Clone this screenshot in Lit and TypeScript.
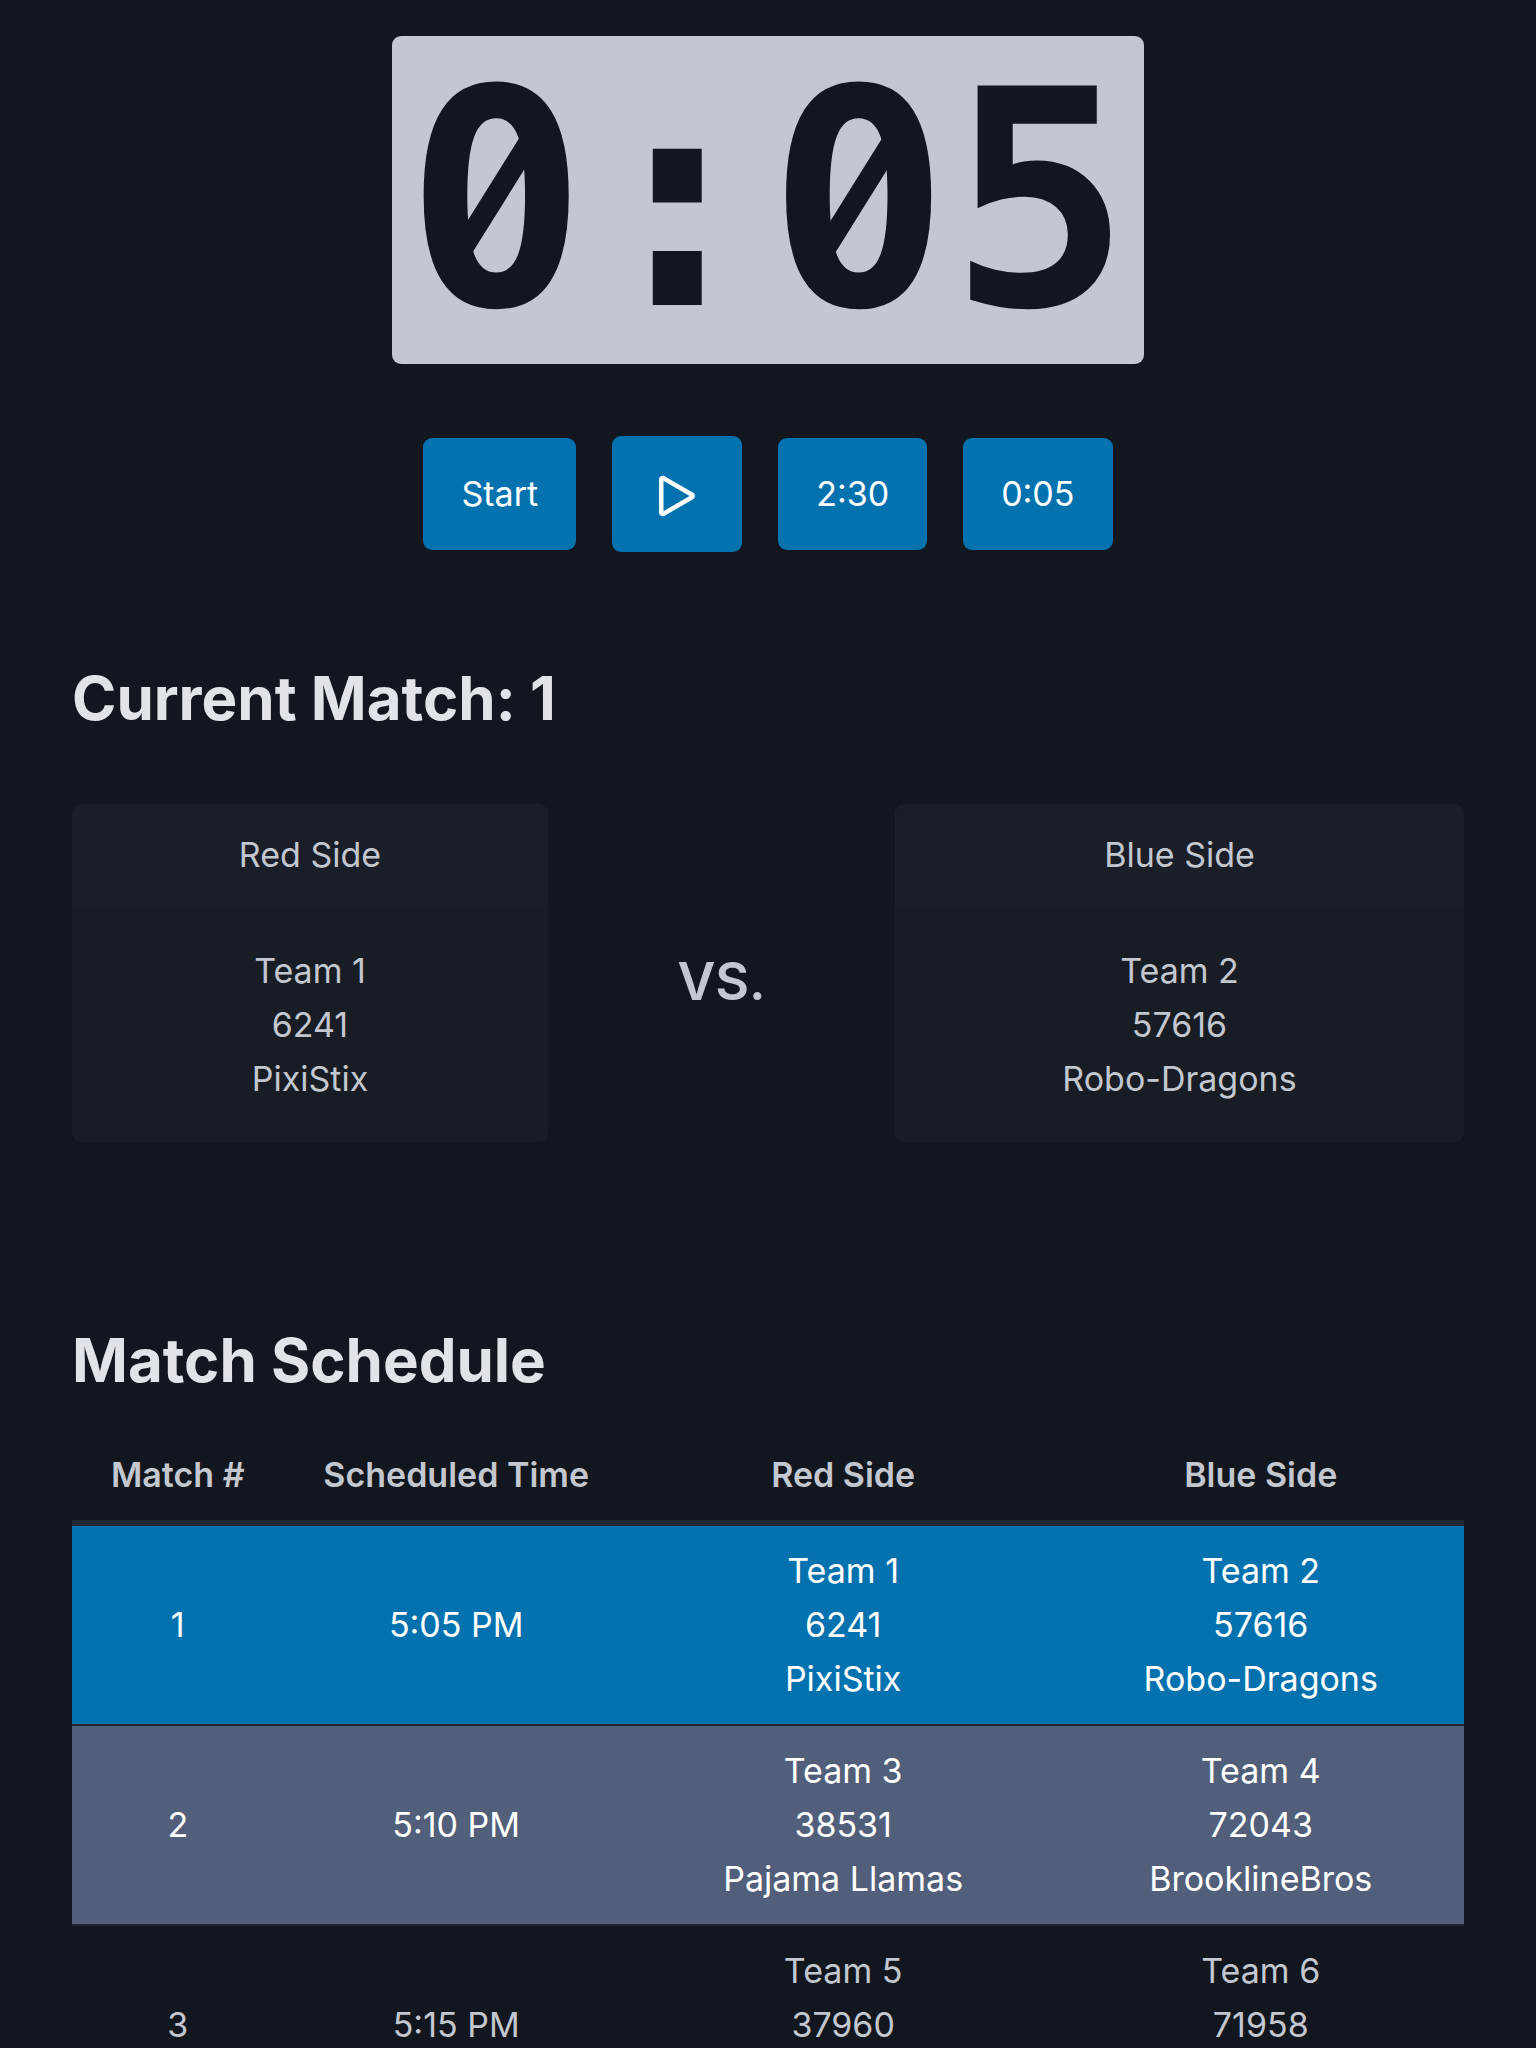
import { LitElement, html, css } from "lit";
import { customElement, property, state } from "lit/decorators.js";

interface Team {
  label: string;
  number: string;
  name?: string;
}

interface Match {
  id: number;
  time: string;
  red: Team;
  blue: Team;
}

const MATCHES: Match[] = [
  {
    id: 1,
    time: "5:05 PM",
    red: { label: "Team 1", number: "6241", name: "PixiStix" },
    blue: { label: "Team 2", number: "57616", name: "Robo-Dragons" },
  },
  {
    id: 2,
    time: "5:10 PM",
    red: { label: "Team 3", number: "38531", name: "Pajama Llamas" },
    blue: { label: "Team 4", number: "72043", name: "BrooklineBros" },
  },
  {
    id: 3,
    time: "5:15 PM",
    red: { label: "Team 5", number: "37960" },
    blue: { label: "Team 6", number: "71958" },
  },
];

const teamLines = (team: Team) => html`
  <div>${team.label}</div>
  <div>${team.number}</div>
  ${team.name ? html`<div>${team.name}</div>` : null}
`;

@customElement("team-card")
class TeamCard extends LitElement {
  @property() heading = "";
  @property({ attribute: false }) team!: Team;

  static styles = css`
    :host {
      display: block;
    }
    .card {
      border-radius: 9px;
      overflow: hidden;
      background: #181c24;
      text-align: center;
    }
    .card-header {
      padding: 24px 36px;
      background: #1a1e29;
    }
    .card-body {
      padding: 38px 36px 36px;
    }
  `;

  render() {
    return html`
      <article class="card">
        <header class="card-header">${this.heading}</header>
        <div class="card-body">${teamLines(this.team)}</div>
      </article>
    `;
  }
}

@customElement("app-root")
class AppRoot extends LitElement {
  @state() private clock = "0:05";
  @state() private current = 1;

  static styles = css`
    :host {
      display: block;
      box-sizing: border-box;
      height: 100vh;
      overflow: hidden;
      padding: 36px 72px 0;
      background: #12161e;
      color: #c2c7d0;
      font-family: Inter, "Liberation Sans", sans-serif;
      font-size: 34px;
      line-height: 54px;
    }
    .timer {
      display: flex;
      width: fit-content;
      margin: 0 auto;
      padding: 2px 14px 0;
      border-radius: 9px;
      background: #c2c7d0;
      color: #12161e;
      font-family: "DejaVu Sans Mono", "Liberation Mono", monospace;
      font-size: 301px;
      font-weight: 700;
      line-height: 326px;
    }
    /* Zeros on the clock carry a slash in place of the font's dot. */
    .zero {
      position: relative;
    }
    .zero::before,
    .zero::after {
      content: "";
      position: absolute;
      top: 157px;
      left: 50%;
      transform: translate(-50%, -50%);
    }
    .zero::before {
      width: 42px;
      height: 42px;
      border-radius: 50%;
      background: #c2c7d0;
    }
    .zero::after {
      width: 21px;
      height: 122px;
      background: #12161e;
      transform: translate(-50%, -50%) rotate(32deg);
    }
    .controls {
      display: flex;
      justify-content: center;
      align-items: center;
      gap: 36px;
      margin-top: 72px;
    }
    .button {
      padding: 29px 38px;
      border: 0;
      border-radius: 9px;
      background: #0472ae;
      color: #fff;
      font: inherit;
      cursor: pointer;
    }
    .button-icon {
      padding: 24px 29px 20px;
    }
    .icon {
      display: block;
      width: 72px;
      height: 72px;
      fill: currentColor;
    }
    .title {
      margin: 0;
      color: #e0e3e7;
      font-size: 60px;
      font-weight: 700;
      line-height: 72px;
    }
    .current {
      margin-top: 110px;
    }
    .versus {
      display: grid;
      grid-template-columns: 476fr 275fr 569fr;
      gap: 36px;
      align-items: center;
      margin-top: 70px;
    }
    .vs {
      padding-top: 18px;
      font-size: 52px;
      font-weight: 600;
      text-align: center;
    }
    .schedule {
      margin-top: 182px;
    }
    .matches {
      width: 100%;
      margin-top: 32px;
      border-collapse: separate;
      border-spacing: 0;
      table-layout: fixed;
      text-align: center;
    }
    .col-id {
      width: 15.2%;
    }
    .col-time {
      width: 24.8%;
    }
    .col-red {
      width: 30.8%;
    }
    .matches th {
      padding: 20px 0 18px;
      border-bottom: 6px solid #212632;
      font-weight: 600;
    }
    .matches td {
      box-sizing: border-box;
      height: 200px;
      padding: 18px 0;
      border-bottom: 2px solid #212632;
    }
    .matches .side {
      vertical-align: top;
    }
    .now td {
      background: #0472ae;
      color: #fff;
    }
    .next td {
      background: #525f7a;
      color: #fff;
    }
  `;

  private rowClass(id: number) {
    if (id === this.current) return "now";
    return id === this.current + 1 ? "next" : "";
  }

  private setClock(value: string) {
    this.clock = value;
  }

  render() {
    const match = MATCHES.find((m) => m.id === this.current)!;
    return html`
      <main>
        <div class="timer" role="timer">${[...this.clock].map(
          (char) => html`<span class=${char === "0" ? "zero" : "char"}>${char}</span>`,
        )}</div>

        <div class="controls">
          <button class="button" type="button">Start</button>
          <button class="button button-icon" type="button" aria-label="Play">
            <svg class="icon" viewBox="0 0 16 16" aria-hidden="true">
              <path
                d="M10.804 8 5 4.633v6.734zm.792-.696a.802.802 0 0 1 0 1.392l-6.363 3.692C4.713 12.69 4 12.345 4 11.692V4.308c0-.653.713-.998 1.233-.696z"
              />
            </svg>
          </button>
          <button class="button" type="button" @click=${() => this.setClock("2:30")}>2:30</button>
          <button class="button" type="button" @click=${() => this.setClock("0:05")}>0:05</button>
        </div>

        <section class="current">
          <h2 class="title">Current Match: ${this.current}</h2>
          <div class="versus">
            <team-card heading="Red Side" .team=${match.red}></team-card>
            <div class="vs">VS.</div>
            <team-card heading="Blue Side" .team=${match.blue}></team-card>
          </div>
        </section>

        <section class="schedule">
          <h2 class="title">Match Schedule</h2>
          <table class="matches">
            <colgroup>
              <col class="col-id" />
              <col class="col-time" />
              <col class="col-red" />
              <col />
            </colgroup>
            <thead>
              <tr>
                <th scope="col">Match #</th>
                <th scope="col">Scheduled Time</th>
                <th scope="col">Red Side</th>
                <th scope="col">Blue Side</th>
              </tr>
            </thead>
            <tbody>
              ${MATCHES.map(
                (m) => html`
                  <tr class=${this.rowClass(m.id)}>
                    <td>${m.id}</td>
                    <td>${m.time}</td>
                    <td class="side">${teamLines(m.red)}</td>
                    <td class="side">${teamLines(m.blue)}</td>
                  </tr>
                `,
              )}
            </tbody>
          </table>
        </section>
      </main>
    `;
  }
}
